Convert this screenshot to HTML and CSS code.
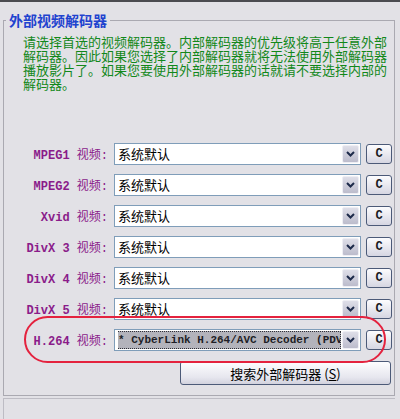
FILE: index.html
```html
<!DOCTYPE html>
<html lang="zh-CN">
<head>
    <meta charset="UTF-8">
    <meta name="viewport" content="width=device-width, initial-scale=1.0">
    <title>外部视频解码器</title>
    <link rel="stylesheet" href="styles.css">
</head>
<body>

    <fieldset class="group">
        <legend>外部视频解码器</legend>
        <p class="intro">请选择首选的视频解码器。内部解码器的优先级将高于任意外部<br>解码器。因此如果您选择了内部解码器就将无法使用外部解码器<br>播放影片了。如果您要使用外部解码器的话就请不要选择内部的<br>解码器。</p>

        <div class="rows">
            <div class="row">
                <span class="label"><b>MPEG1</b> 视频:</span>
                <div class="combo"><span class="combo-text">系统默认</span><span class="combo-btn"><svg width="9" height="6" viewBox="0 0 9 6"><path d="M1 1 L4.5 4.5 L8 1" fill="none" stroke="#1d2a4a" stroke-width="2"/></svg></span></div>
                <button class="pick">C</button>
            </div>
            <div class="row">
                <span class="label"><b>MPEG2</b> 视频:</span>
                <div class="combo"><span class="combo-text">系统默认</span><span class="combo-btn"><svg width="9" height="6" viewBox="0 0 9 6"><path d="M1 1 L4.5 4.5 L8 1" fill="none" stroke="#1d2a4a" stroke-width="2"/></svg></span></div>
                <button class="pick">C</button>
            </div>
            <div class="row">
                <span class="label"><b>Xvid</b> 视频:</span>
                <div class="combo"><span class="combo-text">系统默认</span><span class="combo-btn"><svg width="9" height="6" viewBox="0 0 9 6"><path d="M1 1 L4.5 4.5 L8 1" fill="none" stroke="#1d2a4a" stroke-width="2"/></svg></span></div>
                <button class="pick">C</button>
            </div>
            <div class="row">
                <span class="label"><b>DivX 3</b> 视频:</span>
                <div class="combo"><span class="combo-text">系统默认</span><span class="combo-btn"><svg width="9" height="6" viewBox="0 0 9 6"><path d="M1 1 L4.5 4.5 L8 1" fill="none" stroke="#1d2a4a" stroke-width="2"/></svg></span></div>
                <button class="pick">C</button>
            </div>
            <div class="row">
                <span class="label"><b>DivX 4</b> 视频:</span>
                <div class="combo"><span class="combo-text">系统默认</span><span class="combo-btn"><svg width="9" height="6" viewBox="0 0 9 6"><path d="M1 1 L4.5 4.5 L8 1" fill="none" stroke="#1d2a4a" stroke-width="2"/></svg></span></div>
                <button class="pick">C</button>
            </div>
            <div class="row">
                <span class="label"><b>DivX 5</b> 视频:</span>
                <div class="combo"><span class="combo-text">系统默认</span><span class="combo-btn"><svg width="9" height="6" viewBox="0 0 9 6"><path d="M1 1 L4.5 4.5 L8 1" fill="none" stroke="#1d2a4a" stroke-width="2"/></svg></span></div>
                <button class="pick">C</button>
            </div>
            <div class="row marked">
                <span class="label"><b>H.264</b> 视频:</span>
                <div class="combo"><span class="combo-text"><span class="selected">* CyberLink H.264/AVC Decoder (PDVD)</span></span><span class="combo-btn"><svg width="9" height="6" viewBox="0 0 9 6"><path d="M1 1 L4.5 4.5 L8 1" fill="none" stroke="#1d2a4a" stroke-width="2"/></svg></span></div>
                <button class="pick">C</button>
                <div class="mark"></div>
            </div>
        </div>

        <button class="search">搜索外部解码器 (<u>S</u>)</button>
    </fieldset>

    <div class="footer"></div>

</body>
</html>
```

FILE: styles.css
```css
body {
    font-family: "Noto Sans CJK SC", sans-serif;
    background-color: #e2e1e6;
    color: black;
    margin: 0;
    padding: 0;
    border-top: 2px solid #4b4b50;
    height: 417px;
    overflow: hidden;
}
.group {
    margin: 10px 5px 0 3px;
    padding: 0 1px 10px 2px;
    border: 1px solid #aaa9b1;
    min-width: 0;
}
.group legend {
    padding: 0 3px;
    font-size: 14px;
    font-weight: bold;
    line-height: 16px;
    color: #1f43cf;
}
.intro {
    margin: 7px 0 0 17px;
    font-size: 13px;
    line-height: 14px;
    color: #12881a;
    white-space: nowrap;
}
.rows {
    display: grid;
    row-gap: 9px;
    margin: 52px 0 0 17px;
}
.row {
    display: flex;
    align-items: center;
    height: 22px;
}
.marked {
    position: relative;
}
.label {
    width: 85px;
    margin-right: 6px;
    text-align: right;
    font-family: "Liberation Mono", "Noto Sans CJK SC", monospace;
    font-size: 12px;
    color: #8a1c8a;
    white-space: nowrap;
}
.label b {
    font-weight: bold;
}
.combo {
    display: flex;
    align-items: center;
    box-sizing: border-box;
    width: 247px;
    height: 22px;
    padding: 0 1px 0 3px;
    border: 1px solid #7f9db9;
    background: white;
}
.combo-text {
    flex: 1;
    min-width: 0;
    font-size: 13px;
    line-height: 20px;
    white-space: nowrap;
    overflow: hidden;
}
.selected {
    display: block;
    height: 18px;
    margin-left: -2px;
    margin-right: 1px;
    padding-left: 1px;
    box-sizing: border-box;
    border: 1px dotted #303038;
    background: #b3b3bb;
    font-family: "Liberation Mono", monospace;
    font-size: 11px;
    font-weight: bold;
    line-height: 16px;
    color: #1e1e26;
    overflow: hidden;
}
.combo-btn {
    display: flex;
    align-items: center;
    justify-content: center;
    box-sizing: border-box;
    width: 17px;
    height: 18px;
    border: 1px solid #eeeef4;
    border-radius: 2px;
    background: linear-gradient(#dedee8, #bcbccc);
}
.pick {
    box-sizing: border-box;
    width: 26px;
    height: 20px;
    margin-left: 5px;
    padding: 0;
    border: 1px solid #4c5a78;
    border-radius: 3px;
    background: linear-gradient(#fcfcfe, #d6d6e2);
    font-family: "Liberation Mono", monospace;
    font-size: 12px;
    font-weight: bold;
    color: #1a1a22;
}
.mark {
    position: absolute;
    left: 1px;
    top: -13px;
    box-sizing: border-box;
    width: 362px;
    height: 47px;
    border: 2px solid #e4223e;
    border-radius: 24px;
    pointer-events: none;
}
.search {
    display: block;
    box-sizing: border-box;
    width: 211px;
    height: 24px;
    margin: 10px 0 0 174px;
    padding: 0;
    border: 1px solid #4c5a78;
    border-radius: 3px;
    background: linear-gradient(#fdfdff, #e6e6ee 70%, #d2d2de);
    font-family: "Noto Sans CJK SC", sans-serif;
    font-size: 13px;
    color: black;
}
.footer {
    margin: 2px 5px 0 3px;
    height: 30px;
    border-top: 1px solid #bdbcc4;
    border-left: 1px solid #bdbcc4;
}
```
